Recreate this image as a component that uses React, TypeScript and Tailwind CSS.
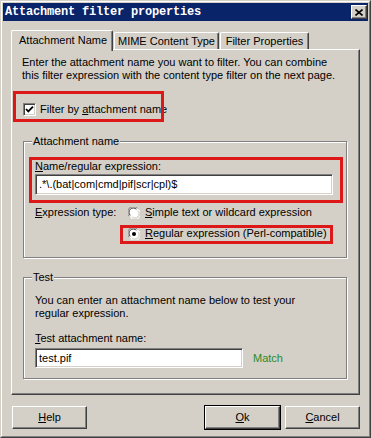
import type { ReactNode } from "react";

const raised =
  "border border-t-white border-l-white border-r-[#404040] border-b-[#404040] shadow-[inset_-1px_-1px_0_#808080]";
const sunken =
  "border border-t-[#808080] border-l-[#808080] border-r-white border-b-white shadow-[inset_1px_1px_0_#404040,inset_-1px_-1px_0_#d4d0c8]";

const U = ({ children }: { children: ReactNode }) => <span className="underline underline-offset-[1px]">{children}</span>;

const Radio = ({ checked }: { checked?: boolean }) => (
  <svg width="12" height="12" viewBox="0 0 12 12" className="shrink-0">
    <circle cx="6" cy="6" r="5.5" fill="#ffffff" />
    <path d="M1.2 9.2 A5.5 5.5 0 0 1 9.2 1.2" stroke="#808080" strokeWidth="1" fill="none" />
    <path d="M2.3 8.4 A4.3 4.3 0 0 1 8.4 2.3" stroke="#404040" strokeWidth="1" fill="none" />
    <path d="M10.8 2.8 A5.5 5.5 0 0 1 2.8 10.8" stroke="#ffffff" strokeWidth="1" fill="none" />
    <path d="M9.7 3.6 A4.3 4.3 0 0 1 3.6 9.7" stroke="#d4d0c8" strokeWidth="1" fill="none" />
    {checked && <circle cx="6" cy="6" r="2" fill="#000" />}
  </svg>
);

const Group = ({ title, children, className }: { title: string; children: ReactNode; className?: string }) => (
  <fieldset
    className={`w-[324px] ml-px border border-[#808080] shadow-[1px_1px_0_#fff,inset_1px_1px_0_#fff] px-[11px] ${className ?? ""}`}
  >
    <legend className="-ml-[3px] px-px bg-[#d4d0c8]">{title}</legend>
    {children}
  </fieldset>
);

const Button = ({ children, primary }: { children: ReactNode; primary?: boolean }) => (
  <button
    className={`w-[75px] h-[23px] flex items-center justify-center bg-[#d4d0c8] ${
      primary
        ? "outline outline-1 outline-black border border-t-white border-l-white border-r-[#404040] border-b-[#404040] shadow-[inset_-1px_-1px_0_#808080]"
        : raised
    }`}
  >
    {children}
  </button>
);

export default function App() {
  return (
    <div className="relative w-[371px] h-[438px] bg-[#d4d0c8] border border-t-[#d4d0c8] border-l-[#d4d0c8] border-r-[#404040] border-b-[#404040] font-['Liberation_Sans',Arial,sans-serif] text-[11px] leading-[13px] text-black">
      <div className="h-full flex flex-col border border-t-white border-l-white border-r-[#808080] border-b-[#808080] p-px">
        {/* title bar */}
        <div className="h-[18px] shrink-0 bg-[#0a246a] flex items-center justify-between pl-[2px] pr-[1px]">
          <span className="font-['Liberation_Mono',monospace] font-bold text-[12px] tracking-[-0.2px] text-white">
            Attachment filter properties
          </span>
          <div className={`w-[16px] h-[14px] bg-[#d4d0c8] flex items-center justify-center ${raised}`}>
            <svg width="8" height="7" viewBox="0 0 8 7">
              <path d="M0.5 0.5 L7.5 6.5 M7.5 0.5 L0.5 6.5" stroke="#000" strokeWidth="1.6" />
            </svg>
          </div>
        </div>

        <div className="px-[8px] pt-[9px]">
          {/* tabs */}
          <div className="relative z-10 flex items-end h-[19px]">
            <div className="w-[102px] h-[21px] -mb-[2px] bg-[#d4d0c8] border-t border-l border-r border-t-white border-l-white border-r-[#404040] rounded-t-[2px] shadow-[inset_-1px_0_0_#808080] pl-[7px] pt-[3px]">
              Attachment Name
            </div>
            <div className="ml-px w-[105px] h-[17px] border-t border-l border-r border-t-white border-l-white border-r-[#404040] rounded-t-[2px] shadow-[inset_-1px_0_0_#808080] flex justify-center pt-[2px]">
              MIME Content Type
            </div>
            <div className="ml-px w-[89px] h-[17px] border-t border-l border-r border-t-white border-l-white border-r-[#404040] rounded-t-[2px] shadow-[inset_-1px_0_0_#808080] flex justify-center pt-[2px]">
              Filter Properties
            </div>
          </div>

          {/* panel */}
          <div className={`w-[349px] h-[346px] ${raised} pl-[10px] pt-[6px]`}>
            <p>
              Enter the attachment name you want to filter. You can combine
              <br />
              this filter expression with the content type filter on the next page.
            </p>

            <label className="mt-[21px] ml-px flex items-center gap-[4px]">
              <span className={`w-[13px] h-[13px] bg-white flex items-center justify-center ${sunken}`}>
                <svg width="9" height="9" viewBox="0 0 9 9">
                  <path d="M1 4 L3.3 6.4 L8 1.6" stroke="#000" strokeWidth="1.8" fill="none" />
                </svg>
              </span>
              <span>
                Filter by <U>a</U>ttachment name
              </span>
            </label>

            <Group title="Attachment name" className="mt-[19px] pt-[12px] pb-[17px]">
              <div>
                <U>N</U>ame/regular expression:
              </div>
              <div className={`mt-px w-[298px] h-[21px] bg-white flex items-center pl-[3px] ${sunken}`}>
                .*\.(bat|com|cmd|pif|scr|cpl)$
              </div>
              <div className="mt-[11px] flex items-center">
                <span className="w-[93px]">
                  <U>E</U>xpression type:
                </span>
                <Radio />
                <span className="ml-[5px]">
                  <U>S</U>imple text or wildcard expression
                </span>
              </div>
              <div className="mt-[8px] pl-[93px] flex items-center">
                <Radio checked />
                <span className="ml-[5px]">
                  <U>R</U>egular expression (Perl-compatible)
                </span>
              </div>
            </Group>

            <Group title="Test" className="mt-[13px] pt-[10px] pb-[10px]">
              <p>
                You can enter an attachment name below to test your
                <br />
                regular expression.
              </p>
              <div className="mt-[12px]">
                <U>T</U>est attachment name:
              </div>
              <div className="mt-[3px] flex items-center">
                <div className={`w-[208px] h-[20px] bg-white flex items-center pl-[3px] ${sunken}`}>test.pif</div>
                <span className="ml-[10px] text-[#2a8a2a]">Match</span>
              </div>
            </Group>
          </div>

          {/* buttons */}
          <div className="mt-[11px] flex items-center">
            <div className="ml-px">
              <Button>
                <U>H</U>elp
              </Button>
            </div>
            <div className="ml-auto flex gap-[5px]">
              <Button primary>
                <U>O</U>k
              </Button>
              <Button>
                <U>C</U>ancel
              </Button>
            </div>
          </div>
        </div>
      </div>

      {/* red annotation boxes */}
      <div className="absolute left-[12px] top-[90px] w-[151px] h-[31px] border-[3px] border-[#dc1818]" />
      <div className="absolute left-[28px] top-[156px] w-[314px] h-[46px] border-[3px] border-[#dc1818]" />
      <div className="absolute left-[119px] top-[224px] w-[213px] h-[19px] border-[3px] border-[#dc1818]" />
    </div>
  );
}
